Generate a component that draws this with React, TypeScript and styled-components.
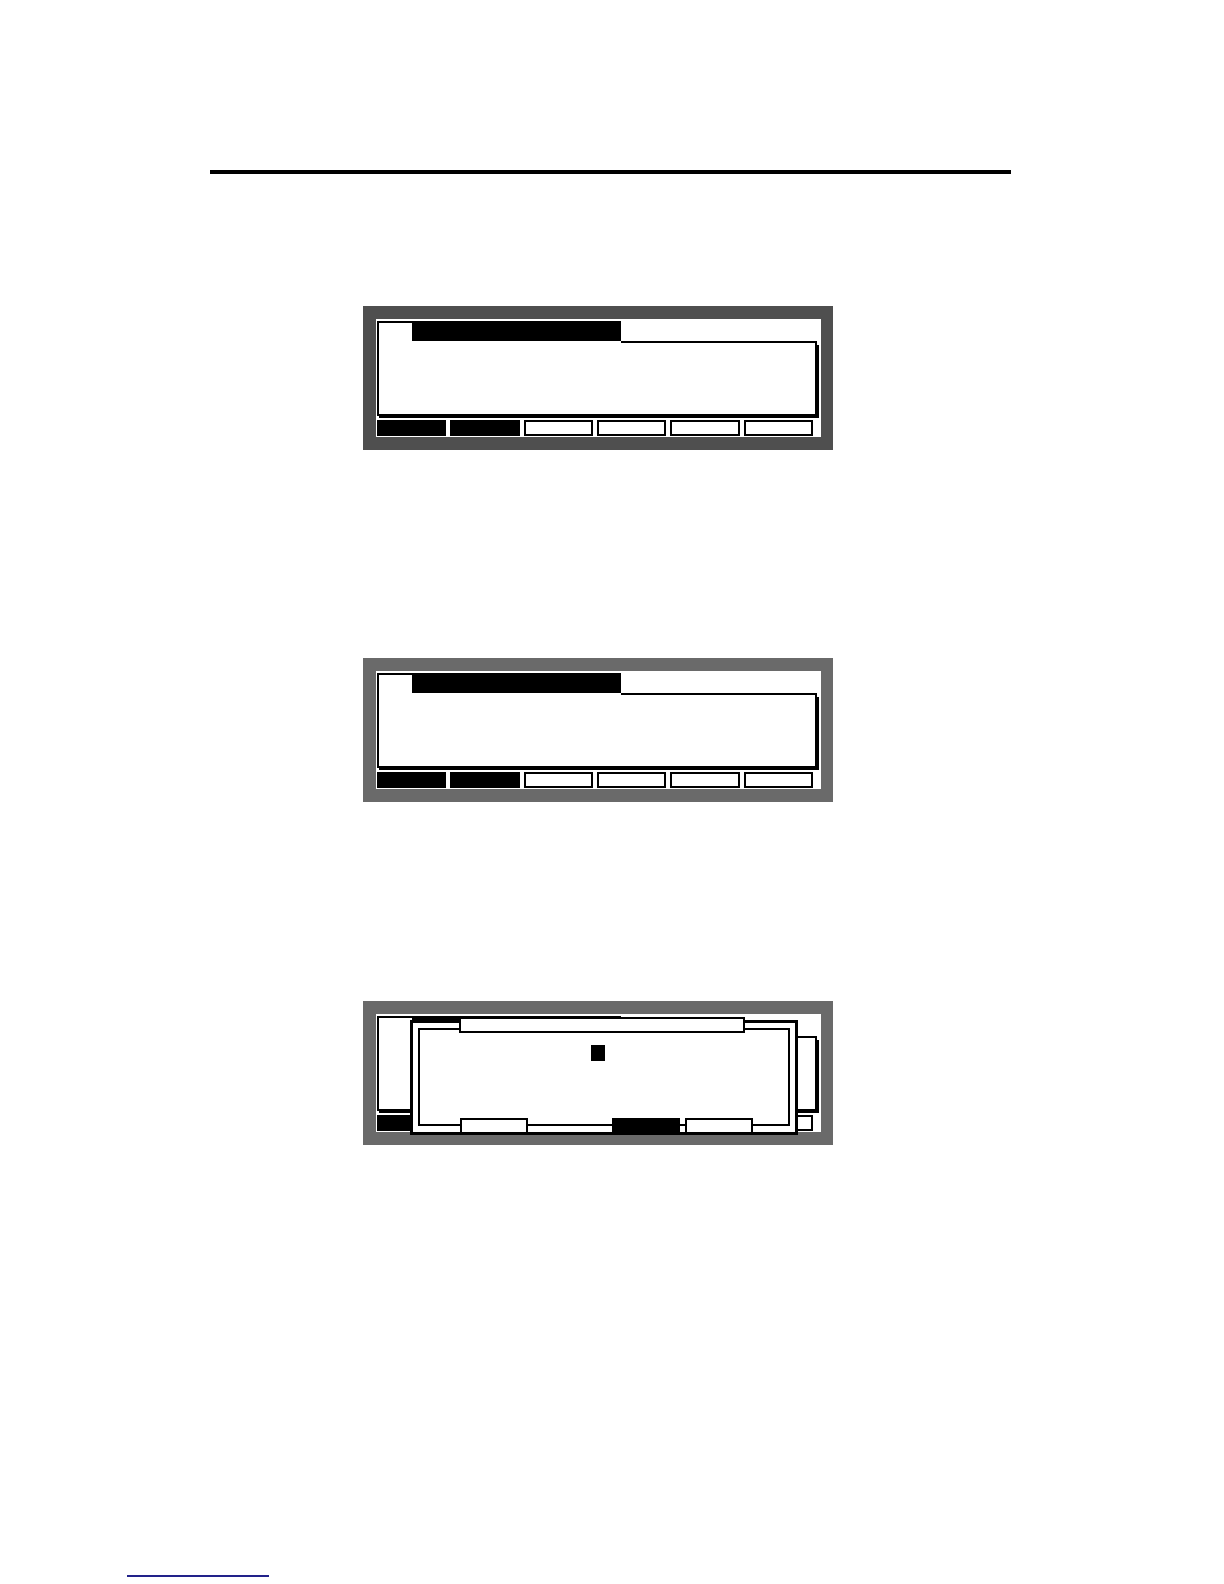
import React from 'react';
import styled, { createGlobalStyle } from 'styled-components';

const GlobalStyle = createGlobalStyle`
    html, body {
        margin: 0;
        padding: 0;
        background: #ffffff;
        font-family: "Liberation Sans", Arial, sans-serif;
    }
`;

const Page = styled.div`
    display: flex;
    flex-direction: column;
    align-items: flex-start;
    width: 1224px;
    min-height: 1584px;
    box-sizing: border-box;
`;

const TopRule = styled.div`
    margin: 170px 0 0 210px;
    width: 801px;
    height: 4px;
    background: #000;
`;

const Panel = styled.div<{ $tone: string; $gap: number }>`
    margin: ${(p) => p.$gap}px 0 0 363px;
    padding: 13px 12px 13px 13px;
    background: ${(p) => p.$tone};
`;

const Screen = styled.div`
    position: relative;
    width: 445px;
    height: 118px;
    box-sizing: border-box;
    padding: 2px 0 0 1px;
    background: #fff;
    display: flex;
    flex-direction: column;
    gap: 4px;
`;

const Window = styled.div`
    width: 440px;
    height: 95px;
    display: flex;
    flex-direction: column;
`;

const TitleRow = styled.div`
    display: flex;
    height: 22px;
`;

const LeftTab = styled.div`
    width: 35px;
    height: 22px;
    box-sizing: border-box;
    border-top: 2px solid #000;
    border-left: 2px solid #000;
`;

const Title = styled.div`
    width: 209px;
    height: 20px;
    background: #000;
`;

const TitleFill = styled.div`
    flex: 1;
    height: 22px;
    box-sizing: border-box;
    border-bottom: 2px solid #000;
`;

const Body = styled.div`
    flex: 1;
    border: 2px solid #000;
    border-top: none;
    box-shadow: 2px 2px 0 #000;
`;

const KeyRow = styled.div`
    width: 436px;
    height: 16px;
    display: grid;
    grid-template-columns: repeat(6, 1fr);
    gap: 4px;
`;

const Key = styled.div<{ $on?: boolean }>`
    box-sizing: border-box;
    border: 2px solid #000;
    background: ${(p) => (p.$on ? '#000' : '#fff')};
`;

const Dialog = styled.div`
    position: absolute;
    left: 34px;
    top: 6px;
    width: 388px;
    height: 115px;
    box-sizing: border-box;
    padding: 5px;
    border: 3px solid #000;
    background: #fff;
`;

const DialogFrame = styled.div`
    height: 98px;
    box-sizing: border-box;
    border: 2px solid #000;
    padding: 15px 0 0 171px;
`;

const Cursor = styled.div`
    width: 14px;
    height: 16px;
    background: #000;
`;

const DialogTitle = styled.div`
    position: absolute;
    left: 46px;
    top: -6px;
    width: 286px;
    height: 16px;
    box-sizing: border-box;
    border: 2px solid #000;
    background: #fff;
`;

const ButtonRow = styled.div`
    position: absolute;
    left: 47px;
    bottom: -2px;
    width: 293px;
    height: 16px;
    display: flex;
    gap: 5px;
`;

const DialogButton = styled.div<{ $on?: boolean; $push?: boolean }>`
    width: 68px;
    box-sizing: border-box;
    border: 2px solid #000;
    background: ${(p) => (p.$on ? '#000' : '#fff')};
    margin-left: ${(p) => (p.$push ? 'auto' : '0')};
`;

const FooterLink = styled.div`
    margin: 430px 0 0 127px;
    width: 142px;
    height: 2px;
    background: #22228a;
`;

const softKeys = [true, true, false, false, false, false];

const MainScreen = () => (
    <>
        <Window>
            <TitleRow>
                <LeftTab />
                <Title />
                <TitleFill />
            </TitleRow>
            <Body />
        </Window>
        <KeyRow>
            {softKeys.map((on, i) => (
                <Key key={i} $on={on} />
            ))}
        </KeyRow>
    </>
);

const App = () => (
    <>
        <GlobalStyle />
        <Page>
            <TopRule />
            <Panel $tone="#4f4f4f" $gap={132}>
                <Screen>
                    <MainScreen />
                </Screen>
            </Panel>
            <Panel $tone="#6a6a6a" $gap={208}>
                <Screen>
                    <MainScreen />
                </Screen>
            </Panel>
            <Panel $tone="#6a6a6a" $gap={199}>
                <Screen>
                    <MainScreen />
                    <Dialog>
                        <DialogFrame>
                            <Cursor />
                        </DialogFrame>
                        <DialogTitle />
                        <ButtonRow>
                            <DialogButton />
                            <DialogButton $on $push />
                            <DialogButton />
                        </ButtonRow>
                    </Dialog>
                </Screen>
            </Panel>
            <FooterLink />
        </Page>
    </>
);

export default App;
